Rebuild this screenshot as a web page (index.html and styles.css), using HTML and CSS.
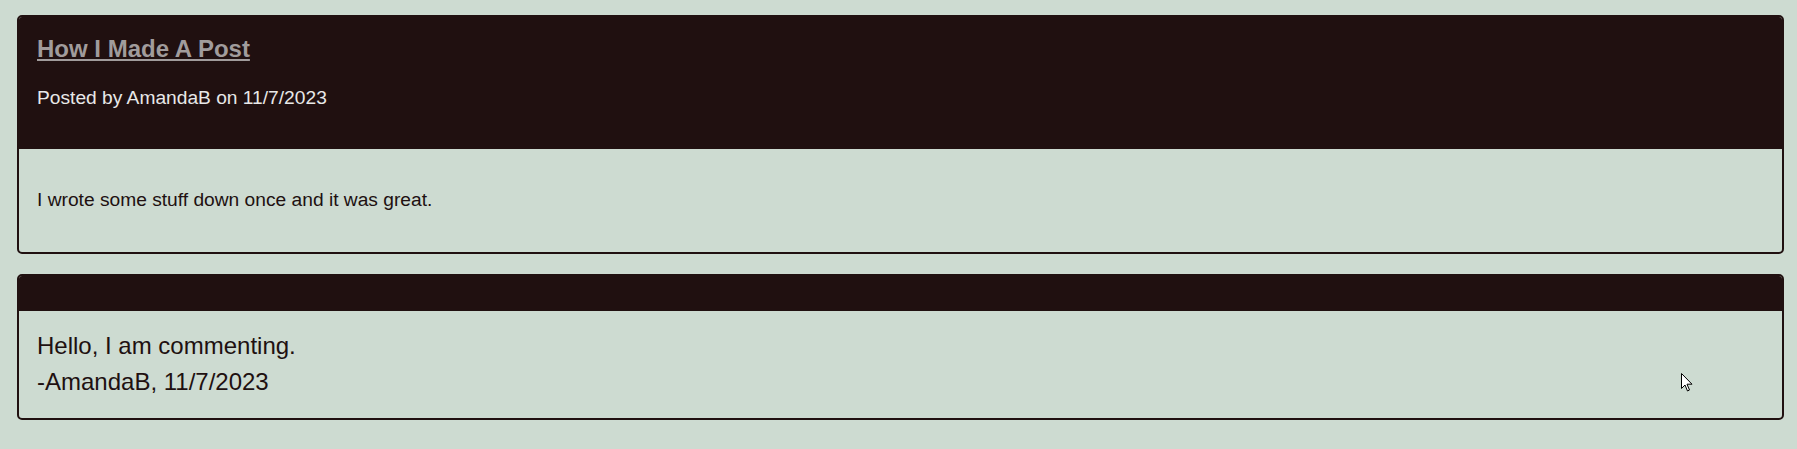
FILE: index.html
```html
<!DOCTYPE html>
<html>
<head>
<meta charset="utf-8">
<link rel="stylesheet" href="styles.css">
</head>
<body>
<div class="page">
  <div class="card">
    <div class="card-head">
      <h2 class="title"><a href="#">How I Made A Post</a></h2>
      <p class="meta">Posted by AmandaB on 11/7/2023</p>
    </div>
    <div class="card-body">
      <p class="text">I wrote some stuff down once and it was great.</p>
    </div>
  </div>
  <div class="card">
    <div class="card-head card-head-empty"></div>
    <div class="card-body comment">
      <p class="comment-line">Hello, I am commenting.</p>
      <p class="comment-line">-AmandaB, 11/7/2023</p>
    </div>
  </div>
</div>
<svg class="cursor" width="12" height="19" viewBox="0 0 12 19"><path d="M0.5 0.5 L0.5 15.5 L4 12 L6.5 18 L8.5 17 L6 11.2 L11 11.2 Z" fill="#fff" stroke="#000" stroke-width="1"/></svg>
</body>
</html>
```
FILE: styles.css
```css
html, body {
  margin: 0;
  padding: 0;
  background: #cddbd1;
}
body {
  font-family: "Liberation Sans", Arial, sans-serif;
  color: #201010;
  position: relative;
  min-height: 449px;
}
.page {
  padding: 15px 13px 0 17px;
  display: flex;
  flex-direction: column;
  gap: 20px;
}
.card {
  border: 2px solid #201010;
  border-radius: 5px;
  overflow: hidden;
}
.card-head {
  background: #201010;
  padding: 18px 18px 40px 18px;
}
.card-head-empty {
  height: 35px;
  padding: 0;
}
.title {
  margin: 0;
  font-size: 24px;
  line-height: 28px;
  font-weight: bold;
}
.title a {
  color: #a19c9c;
  text-decoration: underline;
}
.meta {
  margin: 24px 0 0 0;
  font-size: 19.2px;
  line-height: 22px;
  color: #e8e8e8;
}
.card-body {
  padding: 40px 18px 41px 18px;
}
.text {
  margin: 0;
  font-size: 19.2px;
  line-height: 22px;
}
.comment {
  padding: 17px 18px 18px 18px;
}
.comment-line {
  margin: 0;
  font-size: 24px;
  line-height: 36px;
}
.cursor {
  position: absolute;
  left: 1681px;
  top: 373px;
}
```
